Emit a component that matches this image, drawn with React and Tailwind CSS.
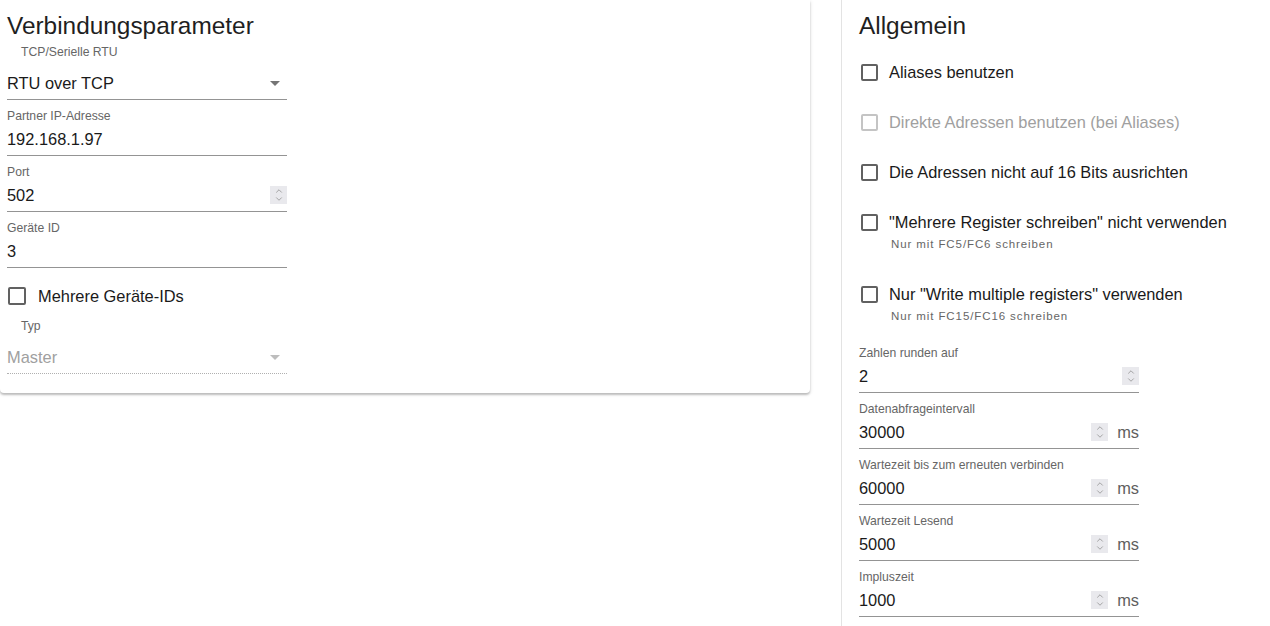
import { ChevronDown, ChevronUp } from 'lucide-react';

const font = { fontFamily: '"Liberation Sans", Arial, sans-serif' };

function Spinner() {
  return (
    <span className="flex h-[18px] w-[17px] flex-col items-center justify-center bg-[#e9e9ed] text-[#8c8c8c]">
      <ChevronUp size={10} strokeWidth={1.8} className="-mb-[1px]" />
      <ChevronDown size={10} strokeWidth={1.8} className="-mt-[1px]" />
    </span>
  );
}

function Arrow({ disabled }) {
  return (
    <svg width="10" height="5" viewBox="0 0 10 5" className="mr-[7px]">
      <path d="M0 0 L10 0 L5 5 Z" fill={disabled ? '#bdbdbd' : '#757575'} />
    </svg>
  );
}

function SelectField({ label, value, disabled, first }) {
  return (
    <div className={first ? 'mt-[2px] w-[280px]' : 'mt-[1px] w-[280px]'}>
      <div className="h-4 pl-[14px] text-[12.2px] leading-4 text-[#666]">{label}</div>
      <div
        className={
          disabled
            ? 'mt-[11px] flex items-center justify-between border-b border-dotted border-[#b0b0b0] pb-1'
            : 'mt-[11px] flex items-center justify-between border-b border-[#949494] pb-1'
        }
      >
        <span className={disabled ? 'h-6 text-[16.4px] leading-6 text-[#a0a0a0]' : 'h-6 text-[16.4px] leading-6 text-[#1a1a1a]'}>
          {value}
        </span>
        <Arrow disabled={disabled} />
      </div>
    </div>
  );
}

function TextField({ label, value, spinner, unit }) {
  return (
    <div className="mt-[8px] w-[280px]">
      <div className="h-4 text-[12.2px] leading-4 text-[#666]">{label}</div>
      <div className="mt-[3px] flex items-center border-b border-[#949494] pb-1">
        <span className="h-6 flex-1 text-[16.4px] leading-6 text-[#1a1a1a]">{value}</span>
        {spinner && <Spinner />}
        {unit && <span className="ml-[9px] h-6 text-[16.4px] leading-6 text-[#5f5f5f]">{unit}</span>}
      </div>
    </div>
  );
}

function Checkbox({ label, disabled, helper, height }) {
  return (
    <div className={`flex flex-col ${height}`}>
      <div className="flex h-6 items-center">
        <span
          className={
            disabled
              ? 'ml-[2px] h-[17px] w-[17px] rounded-[2px] border-2 border-[#c4c4c4]'
              : 'ml-[2px] h-[17px] w-[17px] rounded-[2px] border-2 border-[#616161]'
          }
        />
        <span className={disabled ? 'ml-[11px] text-[16.4px] text-[#a0a0a0]' : 'ml-[11px] text-[16.4px] text-[#1a1a1a]'}>
          {label}
        </span>
      </div>
      {helper && (
        <div className="ml-[32px] mt-[3px] text-[11.5px] leading-[14px] tracking-[0.9px] text-[#666]">{helper}</div>
      )}
    </div>
  );
}

export default function App() {
  return (
    <div className="flex h-[626px] w-[1270px] items-start overflow-hidden bg-white" style={font}>
      <div className="w-[810px] rounded-b-[4px] bg-white px-[7px] pb-[19px] pt-[10px] shadow-[0_2px_2px_rgba(0,0,0,0.2),0_1px_4px_rgba(0,0,0,0.12)]">
        <h2 className="h-8 text-[24.4px] leading-8 text-[#1f1f1f]">Verbindungsparameter</h2>
        <SelectField label="TCP/Serielle RTU" value="RTU over TCP" first />
        <TextField label="Partner IP-Adresse" value="192.168.1.97" />
        <TextField label="Port" value="502" spinner />
        <TextField label="Geräte ID" value="3" />
        <div className="mt-[19px] flex h-[18px] items-center">
          <span className="ml-[1px] h-[18px] w-[18px] rounded-[2px] border-2 border-[#616161]" />
          <span className="ml-[12px] text-[16.4px] text-[#1a1a1a]">Mehrere Geräte-IDs</span>
        </div>
        <div className="mt-[13px]">
          <SelectField label="Typ" value="Master" disabled />
        </div>
      </div>

      <div className="ml-[31px] h-[626px] flex-1 border-l border-[#e3e3e3] pl-[17px] pt-[10px]">
        <h2 className="h-8 text-[24.4px] leading-8 text-[#1f1f1f]">Allgemein</h2>
        <div className="mt-[18px] flex flex-col">
          <Checkbox label="Aliases benutzen" height="h-[50px]" />
          <Checkbox label="Direkte Adressen benutzen (bei Aliases)" disabled height="h-[50px]" />
          <Checkbox label="Die Adressen nicht auf 16 Bits ausrichten" height="h-[50px]" />
          <Checkbox
            label={'"Mehrere Register schreiben" nicht verwenden'}
            helper="Nur mit FC5/FC6 schreiben"
            height="h-[72px]"
          />
          <Checkbox
            label={'Nur "Write multiple registers" verwenden'}
            helper="Nur mit FC15/FC16 schreiben"
            height="h-[55px]"
          />
        </div>
        <TextField label="Zahlen runden auf" value="2" spinner />
        <TextField label="Datenabfrageintervall" value="30000" spinner unit="ms" />
        <TextField label="Wartezeit bis zum erneuten verbinden" value="60000" spinner unit="ms" />
        <TextField label="Wartezeit Lesend" value="5000" spinner unit="ms" />
        <TextField label="Impluszeit" value="1000" spinner unit="ms" />
      </div>
    </div>
  );
}
